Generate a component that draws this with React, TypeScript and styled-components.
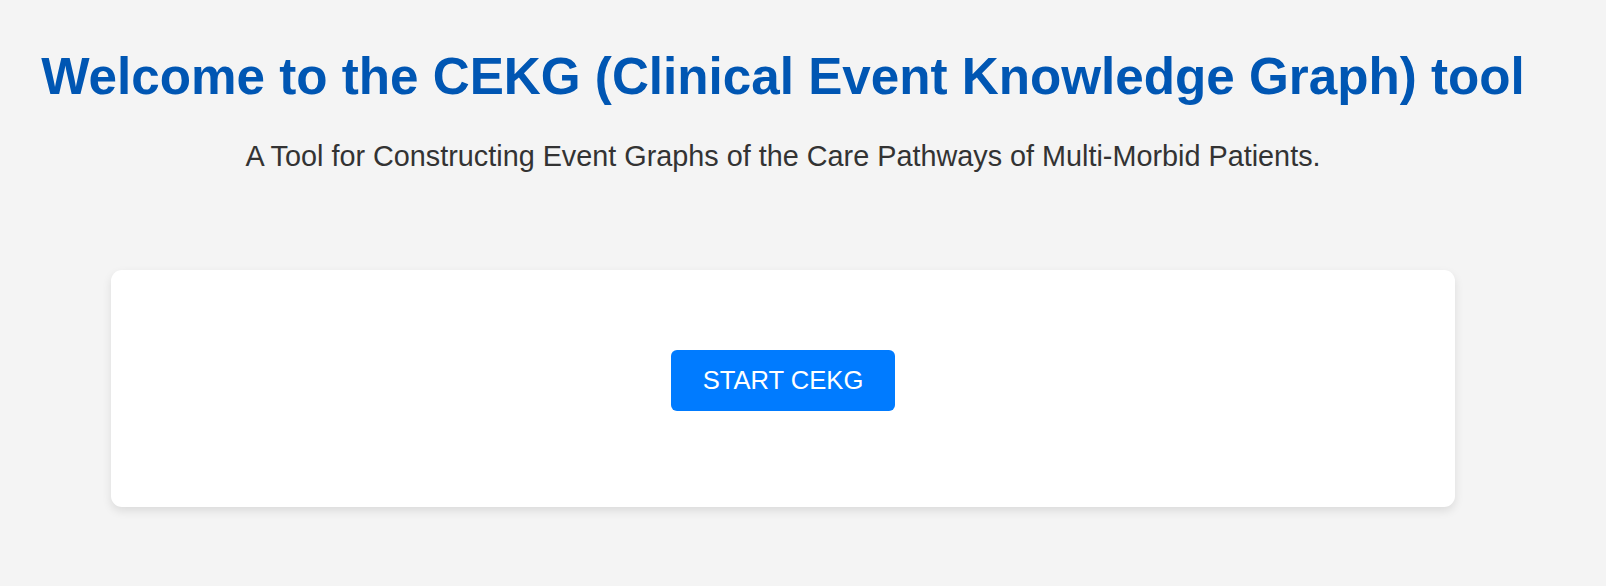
import React from "react";
import styled, { createGlobalStyle } from "styled-components";

const GlobalStyle = createGlobalStyle`
  html, body {
    margin: 0;
    padding: 0;
    background: #f4f4f4;
    font-family: "Liberation Sans", Arial, sans-serif;
  }
`;

const Page = styled.div`
  display: flex;
  flex-direction: column;
  align-items: center;
  padding: 47px 40px 60px 0;
`;

const Title = styled.h1`
  margin: 0;
  font-size: 51.2px;
  font-weight: 700;
  color: #0056b3;
  line-height: normal;
  white-space: nowrap;
`;

const Subtitle = styled.p`
  margin: 34px 0 0;
  font-size: 28.8px;
  color: #333333;
  line-height: normal;
  white-space: nowrap;
`;

const Card = styled.div`
  margin-top: 97px;
  width: 1344px;
  box-sizing: border-box;
  padding: 80px 0 96px;
  background: #ffffff;
  border-radius: 11px;
  box-shadow: 0 4px 10px rgba(0, 0, 0, 0.1);
  display: flex;
  justify-content: center;
`;

const StartButton = styled.button`
  width: 224px;
  height: 61px;
  border: none;
  border-radius: 6px;
  background: #007bff;
  color: #ffffff;
  font-family: "Liberation Sans", Arial, sans-serif;
  font-size: 25.6px;
  cursor: pointer;
  display: flex;
  align-items: center;
  justify-content: center;
  padding: 0;
`;

export default function App() {
  return (
    <>
      <GlobalStyle />
      <Page>
        <Title>Welcome to the CEKG (Clinical Event Knowledge Graph) tool</Title>
        <Subtitle>
          A Tool for Constructing Event Graphs of the Care Pathways of Multi-Morbid Patients.
        </Subtitle>
        <Card>
          <StartButton>START CEKG</StartButton>
        </Card>
      </Page>
    </>
  );
}
